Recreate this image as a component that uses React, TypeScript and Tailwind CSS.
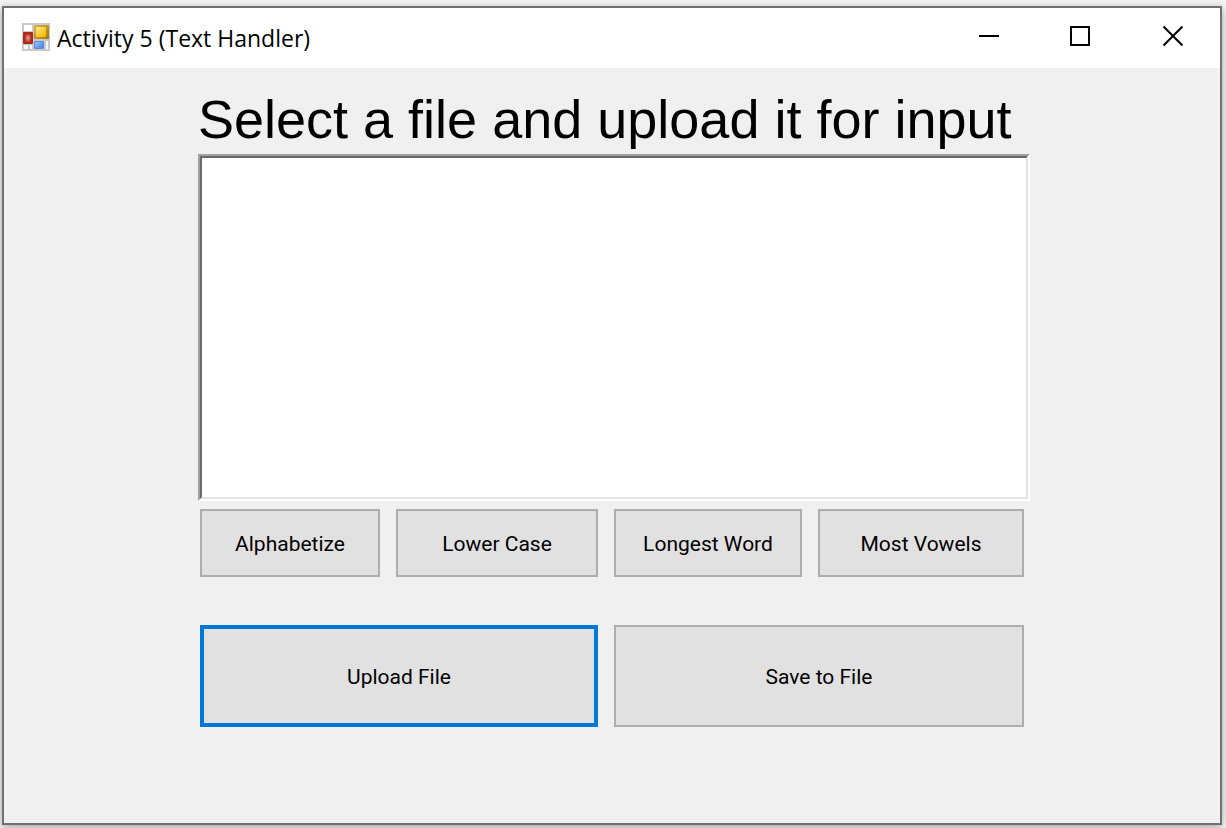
import type { ReactNode } from "react";

function AppIcon() {
  return (
    <svg width="28" height="28" viewBox="0 0 28 28" aria-hidden="true" className="mb-0.5 shrink-0">
      <defs>
        <linearGradient id="yellow" x1="0" y1="0" x2="1" y2="1">
          <stop offset="0" stopColor="#ffe680" />
          <stop offset="1" stopColor="#f3b800" />
        </linearGradient>
        <linearGradient id="yellowEdge" x1="0" y1="0" x2="1" y2="1">
          <stop offset="0" stopColor="#dcb44c" />
          <stop offset="1" stopColor="#a47800" />
        </linearGradient>
        <radialGradient id="red">
          <stop offset="0" stopColor="#eda79c" />
          <stop offset="1" stopColor="#bf3a2a" />
        </radialGradient>
        <linearGradient id="blue" x1="0" y1="0" x2="1" y2="1">
          <stop offset="0" stopColor="#9cc2ff" />
          <stop offset="1" stopColor="#4a80e2" />
        </linearGradient>
      </defs>
      <rect width="28" height="28" fill="#c9c9c9" />
      <rect x="2" y="2" width="8" height="6" fill="#fff" />
      <rect x="2" y="22" width="4" height="4" fill="#f7f7f7" />
      <rect x="8" y="22" width="2" height="4" fill="#f7f7f7" />
      <rect x="24" y="18" width="2" height="8" fill="#f7f7f7" />
      <rect x="12" y="2" width="15" height="14" rx="1" fill="url(#yellowEdge)" />
      <rect x="14" y="4" width="10" height="10" rx="1" fill="url(#yellow)" />
      <rect x="1" y="9" width="10" height="12" rx="1" fill="#a82a1e" />
      <rect x="3" y="11" width="6" height="8" rx="1" fill="url(#red)" />
      <rect x="12" y="18" width="10" height="8" rx="1" fill="#5a88dc" />
      <rect x="13" y="19" width="8" height="6" rx="1" fill="url(#blue)" />
    </svg>
  );
}

function CaptionButton({ label, children }: { label: string; children: ReactNode }) {
  return (
    <button type="button" aria-label={label} className="flex h-14 w-23 items-center justify-center hover:bg-[#e5e5e5]">
      <svg width="22" height="22" viewBox="0 0 22 22" fill="none" stroke="#000" strokeWidth="2" aria-hidden="true">
        {children}
      </svg>
    </button>
  );
}

function ActionButton({ children, wide, focused }: { children: ReactNode; wide?: boolean; focused?: boolean }) {
  return (
    <button
      type="button"
      className={`flex items-center justify-center bg-[#e1e1e1] pt-0.5 font-[Roboto,sans-serif] text-[21px] leading-7 text-black ${
        wide ? "col-span-2" : ""
      } ${focused ? "border-4 border-[#0078d7]" : "border-2 border-[#adadad]"}`}
    >
      {children}
    </button>
  );
}

export default function App() {
  return (
    <div className="flex min-h-screen bg-[#f4f4f4] pt-1.5 pr-1 pb-[3px] pl-0.5">
      <main className="flex flex-1 flex-col border-2 border-[#707070] bg-[#f0f0f0] shadow-[0_2px_8px_0_rgba(0,0,0,0.35)]">
        <header className="flex h-15 items-center bg-white pr-px pl-[18px]">
          <AppIcon />
          <h1 className="ml-[7px] flex-1 font-['Open_Sans','Noto_Sans',sans-serif] text-[23px] leading-8 text-black">
            Activity 5 (Text Handler)
          </h1>
          <div className="flex self-start">
            <CaptionButton label="Minimize">
              <path d="M1 11H21" />
            </CaptionButton>
            <CaptionButton label="Maximize">
              <path d="M1 2H19V20H1Z" />
            </CaptionButton>
            <CaptionButton label="Close">
              <path d="M1.5 1.5L20.5 20.5M20.5 1.5L1.5 20.5" />
            </CaptionButton>
          </div>
        </header>
        <section className="flex flex-col pt-[23px] pr-[190px] pl-[194px]">
          <label
            htmlFor="content"
            className="h-[63px] font-['Liberation_Sans',Arial,sans-serif] text-[54px] leading-[56px] whitespace-nowrap text-black"
          >
            Select a file and upload it for input
          </label>
          <div className="flex h-[347px] border-2 border-t-[#a0a0a0] border-r-white border-b-white border-l-[#a0a0a0]">
            <textarea
              id="content"
              className="flex-1 resize-none border-2 border-t-[#696969] border-r-[#e3e3e3] border-b-[#e3e3e3] border-l-[#696969] bg-white p-1 font-['Liberation_Sans',Arial,sans-serif] text-[22px] outline-none"
            />
          </div>
          <div className="mt-2 grid grid-cols-[180fr_202fr_188fr_206fr] grid-rows-[68px_102px] gap-x-4 gap-y-12 pr-1.5 pl-0.5">
            <ActionButton>Alphabetize</ActionButton>
            <ActionButton>Lower Case</ActionButton>
            <ActionButton>Longest Word</ActionButton>
            <ActionButton>Most Vowels</ActionButton>
            <ActionButton wide focused>
              Upload File
            </ActionButton>
            <ActionButton wide>Save to File</ActionButton>
          </div>
        </section>
      </main>
    </div>
  );
}
